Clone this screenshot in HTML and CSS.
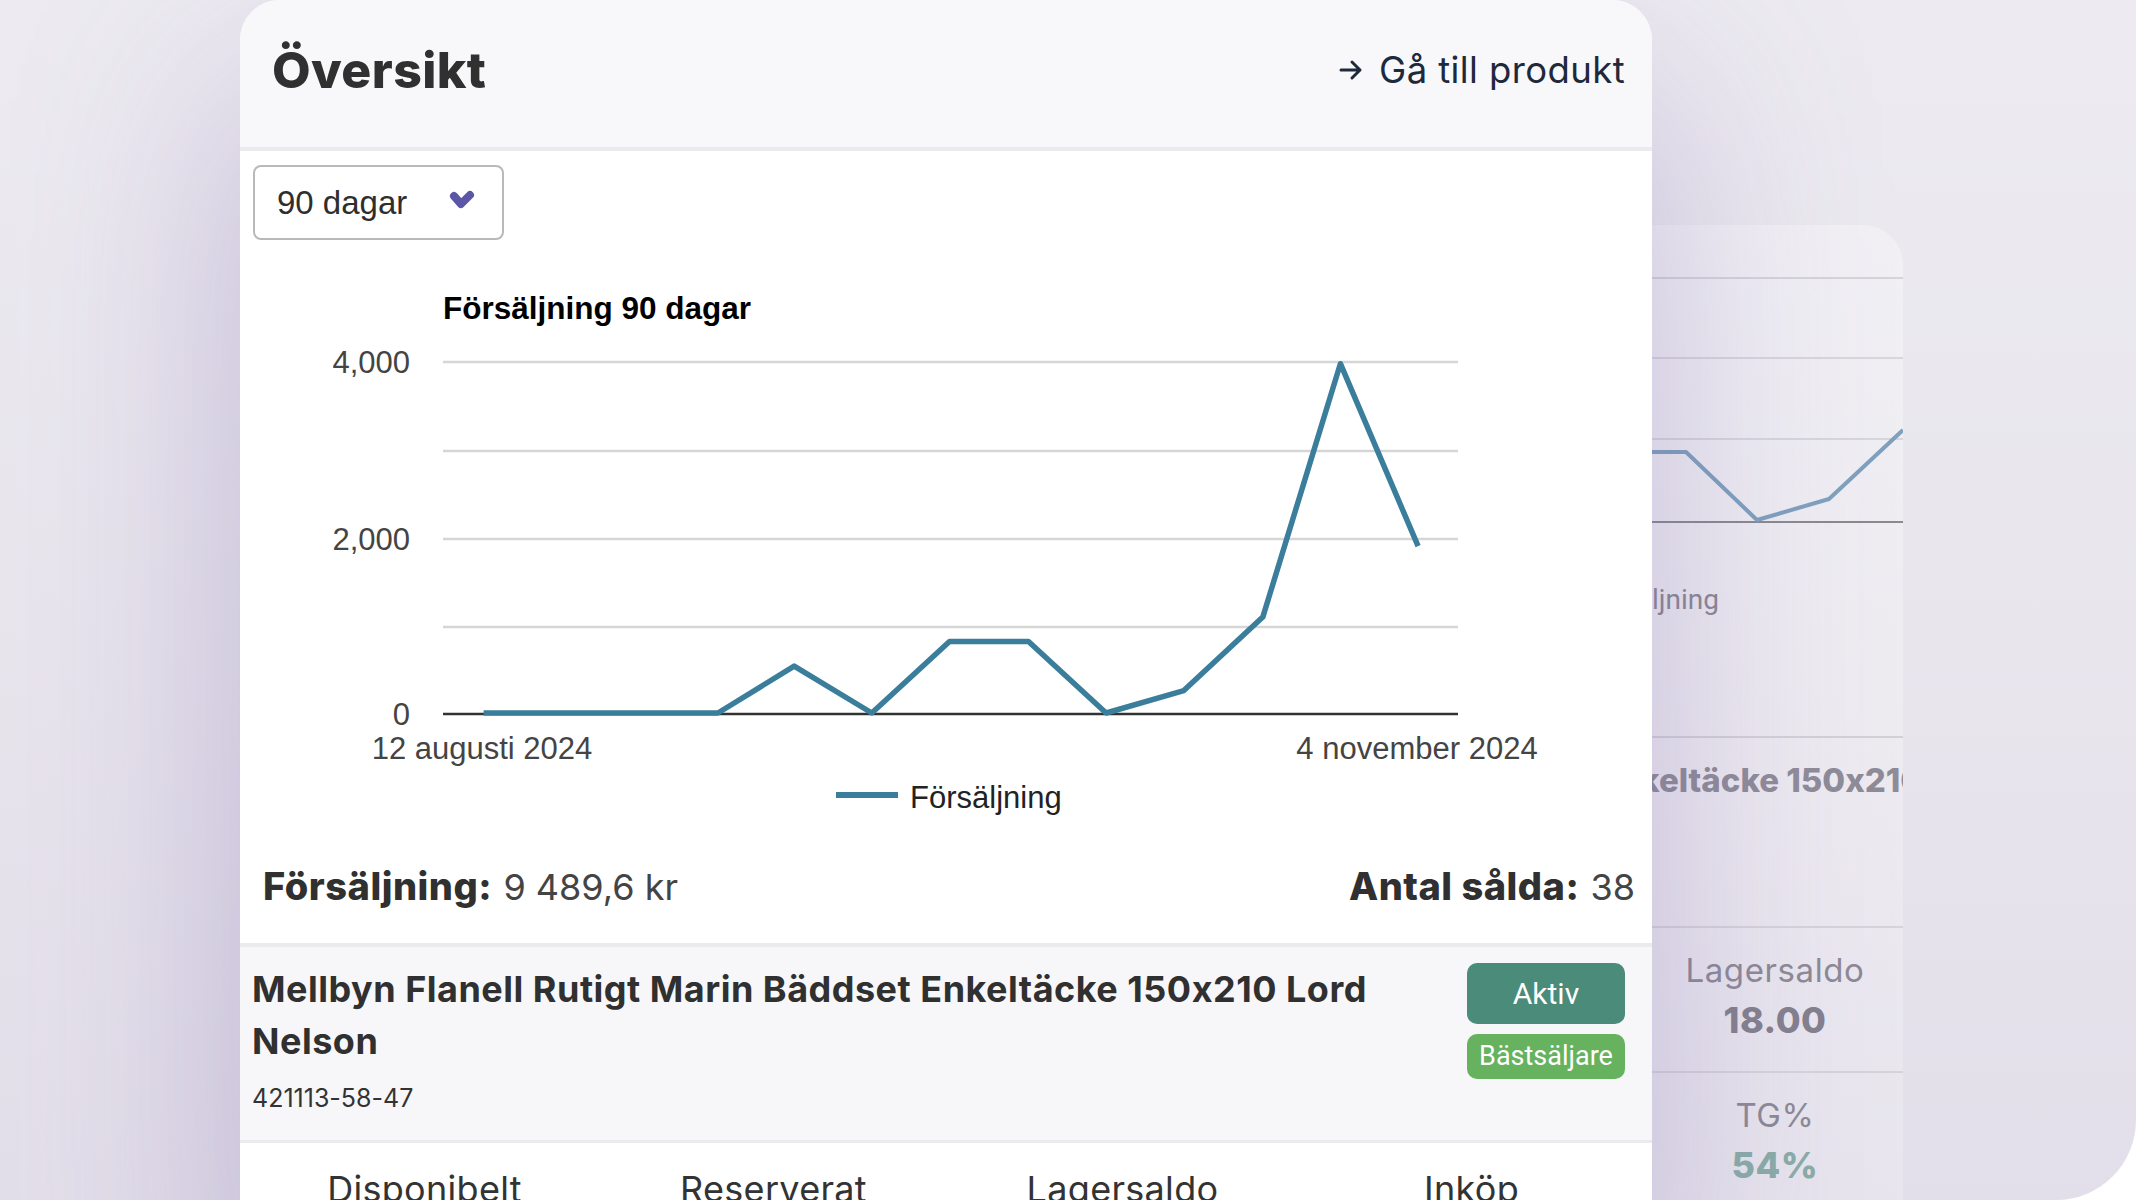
FILE: index.html
```html
<!DOCTYPE html>
<html lang="sv">
<head>
<meta charset="utf-8">
<title>Översikt</title>
<link rel="stylesheet" href="styles.css">
</head>
<body>
<div class="stage">
  <aside class="ghost-card">
    <div class="ghost-head"></div>
    <svg class="ghost-chart" width="512" height="457" viewBox="1391 279 512 457">
      <line class="g-grid" x1="1391" x2="1903" y1="358" y2="358"/>
      <line class="g-grid" x1="1391" x2="1903" y1="439" y2="439"/>
      <line class="g-axis" x1="1391" x2="1903" y1="522" y2="522"/>
      <polyline class="g-line" points="1560,470 1600,452 1686,452 1757,520 1829,499 1903,430"/>
      <text class="g-legend" x="1719" y="609" text-anchor="end">Försäljning</text>
    </svg>
    <div class="ghost-title"><span>Enkeltäcke 150x210 Lord Nelson</span></div>
    <div class="ghost-cells">
      <div class="ghost-cell"><div class="gc-label">Disponibelt</div><div class="gc-value">18.00</div></div>
      <div class="ghost-cell"><div class="gc-label">Lagersaldo</div><div class="gc-value">18.00</div></div>
      <div class="ghost-cell"><div class="gc-label">TB</div><div class="gc-value">254</div></div>
      <div class="ghost-cell"><div class="gc-label">TG%</div><div class="gc-value teal">54%</div></div>
    </div>
  </aside>

  <main class="card">
    <header class="card-head">
      <h1 class="title">Översikt</h1>
      <a class="goto" href="#">
        <svg class="goto-icon" width="28" height="28" viewBox="0 0 28 28"><path d="M4 14H23M15 6l8 8-8 8"/></svg>
        <span>Gå till produkt</span>
      </a>
    </header>

    <section class="chart-section">
      <div class="select">
        <span>90 dagar</span>
        <svg class="chev" width="26" height="22" viewBox="0 0 26 22"><path d="M5 7l7 8 9-9"/></svg>
      </div>
      <svg class="chart" width="1412" height="580" viewBox="240 260 1412 580">
        <text class="c-title" x="443" y="319">Försäljning 90 dagar</text>
        <line class="c-grid" x1="443" x2="1458" y1="362" y2="362"/>
        <line class="c-grid" x1="443" x2="1458" y1="451" y2="451"/>
        <line class="c-grid" x1="443" x2="1458" y1="539" y2="539"/>
        <line class="c-grid" x1="443" x2="1458" y1="627" y2="627"/>
        <line class="c-axis" x1="443" x2="1458" y1="714" y2="714"/>
        <text class="c-lab" x="410" y="373" text-anchor="end">4,000</text>
        <text class="c-lab" x="410" y="550" text-anchor="end">2,000</text>
        <text class="c-lab" x="410" y="725" text-anchor="end">0</text>
        <polyline class="c-line" points="483.6,713 561.5,713 639.4,713 717.9,713 794.2,666.1 871.8,713 949.5,641.6 1028.5,641.6 1106.1,713 1183.8,690.6 1262.8,617.1 1340.4,363.7 1418.1,546.2"/>
        <text class="c-lab" x="482" y="759" text-anchor="middle">12 augusti 2024</text>
        <text class="c-lab" x="1417" y="759" text-anchor="middle">4 november 2024</text>
        <line class="c-legend" x1="836" x2="898" y1="795" y2="795"/>
        <text class="c-leg-text" x="910" y="808">Försäljning</text>
      </svg>
    </section>

    <div class="stats">
      <div class="stat"><b>Försäljning:</b> <span class="stat-val">9 489,6 kr</span></div>
      <div class="stat"><b>Antal sålda:</b> <span class="stat-val">38</span></div>
    </div>

    <section class="product">
      <div class="product-info">
        <h2 class="product-name">Mellbyn Flanell Rutigt Marin Bäddset Enkeltäcke 150x210 Lord Nelson</h2>
        <div class="sku">421113-58-47</div>
      </div>
      <div class="badges">
        <span class="badge badge-active">Aktiv</span>
        <span class="badge badge-best">Bästsäljare</span>
      </div>
    </section>

    <section class="metrics">
      <div class="metric">Disponibelt</div>
      <div class="metric">Reserverat</div>
      <div class="metric">Lagersaldo</div>
      <div class="metric">Inköp</div>
    </section>
  </main>
</div>
</body>
</html>
```

FILE: styles.css
```css
* { box-sizing: border-box; }

html, body {
  margin: 0;
  padding: 0;
  background: #ffffff;
}

.stage {
  position: relative;
  width: 2136px;
  height: 1200px;
  overflow: hidden;
  display: flex;
  align-items: flex-start;
  padding-left: 240px;
  background: linear-gradient(180deg, #edebf1 0%, #e8e5ed 55%, #e3dfea 100%);
  border-bottom-right-radius: 80px;
  font-family: "Inter", "Open Sans", sans-serif;
  font-feature-settings: "calt" 0;
}

/* ---------- faded card behind ---------- */
.ghost-card {
  position: absolute;
  left: 1391px;
  top: 225px;
  width: 512px;
  height: 1040px;
  border-radius: 40px 40px 0 0;
  background: linear-gradient(180deg, rgba(255,255,255,0.32) 0%, rgba(255,255,255,0.18) 100%);
  overflow: hidden;
  z-index: 0;
}

.ghost-head {
  height: 54px;
  border-bottom: 2px solid #d6d3dc;
}

.ghost-chart { display: block; }
.g-grid { stroke: #d8d5de; stroke-width: 2; }
.g-axis { stroke: #8b8992; stroke-width: 2; }
.g-line { fill: none; stroke: #7fa1be; stroke-width: 4; stroke-linejoin: round; }
.g-legend { font-family: "Roboto", "Liberation Sans", sans-serif; font-size: 28px; fill: #8b8895; }

.ghost-title {
  height: 190px;
  border-top: 2px solid #d3d0d9;
  padding: 20px 0 0 208px;
  white-space: nowrap;
  overflow: hidden;
  font-weight: 800;
  font-size: 33px;
  line-height: 44px;
  letter-spacing: 0;
  color: #8f8c99;
}

.ghost-cells {
  display: grid;
  grid-template-columns: 1fr 1fr;
  border-top: 2px solid #d6d3dc;
}

.ghost-cell {
  height: 145px;
  padding-top: 22px;
  text-align: center;
  border-bottom: 2px solid #d6d3dc;
}

.gc-label {
  font-size: 33px;
  line-height: 40px;
  letter-spacing: 0.6px;
  color: #8d8a97;
}

.gc-value {
  margin-top: 4px;
  font-size: 36px;
  line-height: 52px;
  font-weight: 800;
  letter-spacing: 0.5px;
  color: #84818e;
}

.gc-value.teal { color: #8aada8; }

/* ---------- main card ---------- */
.card {
  position: relative;
  z-index: 1;
  width: 1412px;
  height: 1260px;
  flex: none;
  background: #ffffff;
  border-radius: 40px 40px 0 0;
  box-shadow: 0 90px 220px rgba(110, 90, 165, 0.34);
  display: flex;
  flex-direction: column;
  overflow: hidden;
}

.card-head {
  height: 151px;
  flex: none;
  display: flex;
  align-items: center;
  justify-content: space-between;
  padding: 0 27px 8px 32px;
  background: #f8f8fa;
  border-bottom: 4px solid #ebebed;
}

.title {
  margin: 0;
  font-size: 50px;
  font-weight: 800;
  letter-spacing: 0.4px;
  color: #303030;
}

.goto {
  display: flex;
  align-items: center;
  gap: 14px;
  text-decoration: none;
  color: #1e293b;
  font-size: 36.5px;
  letter-spacing: 0.4px;
}

.goto-icon path {
  fill: none;
  stroke: #1e293b;
  stroke-width: 3;
  stroke-linecap: round;
  stroke-linejoin: round;
}

.chart-section {
  flex: none;
  padding: 14px 0 0 13px;
}

.select {
  width: 251px;
  height: 75px;
  display: flex;
  align-items: center;
  justify-content: space-between;
  padding: 0 27px 0 22px;
  border: 2px solid #b9b9bc;
  border-radius: 8px;
  background: #ffffff;
  font-family: "Liberation Sans", Arial, sans-serif;
  font-size: 33px;
  color: #2e2e2e;
}

.chev { margin-top: -6px; }

.chev path {
  fill: none;
  stroke: #5b57a6;
  stroke-width: 8;
  stroke-linecap: round;
  stroke-linejoin: round;
}

.chart {
  display: block;
  margin: 20px 0 0 -13px;
}

.c-title {
  font-family: "Liberation Sans", Arial, sans-serif;
  font-weight: 700;
  font-size: 31.5px;
  fill: #000000;
}

.c-lab {
  font-family: "Liberation Sans", Arial, sans-serif;
  font-size: 31px;
  fill: #444444;
}

.c-leg-text {
  font-family: "Liberation Sans", Arial, sans-serif;
  font-size: 31px;
  fill: #222222;
}

.c-grid { stroke: #d6d6d6; stroke-width: 2.5; }
.c-axis { stroke: #333333; stroke-width: 2.5; }
.c-line {
  fill: none;
  stroke: #3a7e9c;
  stroke-width: 5.5;
  stroke-linejoin: round;
}
.c-legend { stroke: #3a7e9c; stroke-width: 6; }

.stats {
  flex: none;
  height: 103px;
  display: flex;
  align-items: center;
  justify-content: space-between;
  padding: 0 17px 12px 23px;
  font-size: 38px;
  color: #444444;
  letter-spacing: 0.5px;
}

.stat b {
  font-weight: 800;
  color: #303030;
}

.stat-val {
  font-size: 36px;
  letter-spacing: 0;
}

.product {
  flex: none;
  display: flex;
  align-items: flex-start;
  justify-content: space-between;
  gap: 40px;
  padding: 16px 27px 27px 12px;
  background: #f7f7f9;
  border-top: 4px solid #ebebed;
  border-bottom: 3px solid #ebebed;
}

.product-name {
  margin: 0;
  font-size: 36px;
  line-height: 52px;
  font-weight: 700;
  letter-spacing: 0.5px;
  color: #303030;
}

.sku {
  margin-top: 16px;
  font-size: 25px;
  line-height: 30px;
  color: #333333;
}

.badges {
  flex: none;
  width: 158px;
  display: flex;
  flex-direction: column;
  gap: 10px;
}

.badge {
  display: flex;
  align-items: center;
  justify-content: center;
  border-radius: 10px;
  color: #ffffff;
  line-height: 1;
  font-family: "Roboto", "Inter", sans-serif;
}

.badge-active {
  height: 61px;
  background: #4b8b7a;
  font-size: 30px;
}

.badge-best {
  height: 45px;
  background: #66b25e;
  font-size: 27px;
}

.metrics {
  flex: none;
  display: grid;
  grid-template-columns: repeat(4, 1fr);
  padding: 26px 6px 0 10px;
}

.metric {
  text-align: center;
  font-size: 36px;
  line-height: 40px;
  color: #333333;
  letter-spacing: 0.3px;
}
```
